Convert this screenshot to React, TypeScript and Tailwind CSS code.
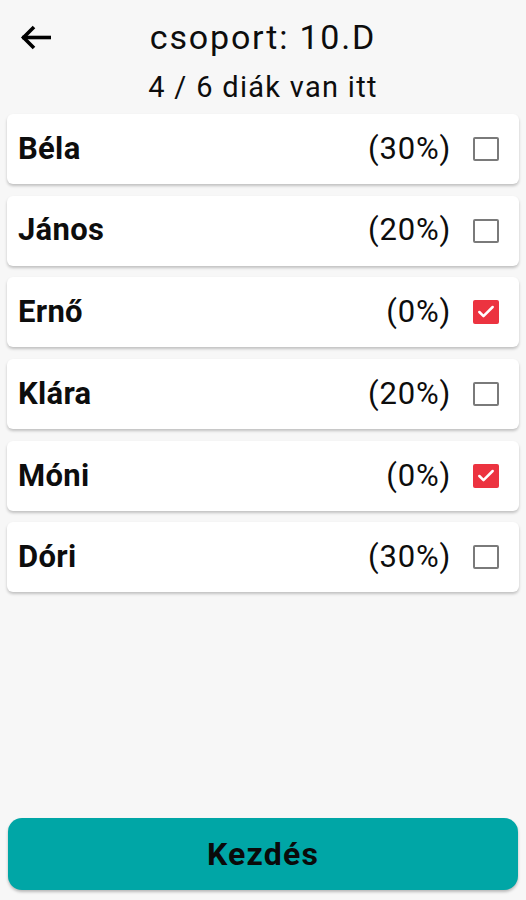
import { Check } from "lucide-react";

type Student = {
  name: string;
  percent: number;
  checked: boolean;
};

const students: Student[] = [
  { name: "Béla", percent: 30, checked: false },
  { name: "János", percent: 20, checked: false },
  { name: "Ernő", percent: 0, checked: true },
  { name: "Klára", percent: 20, checked: false },
  { name: "Móni", percent: 0, checked: true },
  { name: "Dóri", percent: 30, checked: false },
];

function BackArrow() {
  return (
    <svg
      width="31"
      height="25"
      viewBox="0 0 31 25"
      fill="none"
      stroke="#000"
      strokeWidth="3.6"
      strokeLinecap="square"
    >
      <path d="M30 12.5H4" />
      <path d="M14 2 3.5 12.5 14 23" strokeLinecap="butt" />
    </svg>
  );
}

function CheckBox({ checked }: { checked: boolean }) {
  if (checked) {
    return (
      <div className="w-[26px] h-[24px] bg-[#ec3340] rounded-[2px] flex items-center justify-center">
        <Check className="w-[20px] h-[20px] text-white" strokeWidth={3} />
      </div>
    );
  }
  return (
    <div className="w-[26px] h-[24px] border-[2px] border-[#7a7a7a] rounded-[2px] bg-white" />
  );
}

function StudentRow({ student }: { student: Student }) {
  return (
    <div className="h-[70px] bg-white rounded-[6px] shadow-[0_2px_3px_rgba(0,0,0,0.22)] flex items-center pl-[11px] pr-[20px]">
      <span className="flex-1 text-[31px] font-bold text-[#0d0d0d] tracking-[0.3px]">
        {student.name}
      </span>
      <span className="text-[31px] text-[#0d0d0d] tracking-[0.8px]">
        ({student.percent}%)
      </span>
      <div className="ml-[22px]">
        <CheckBox checked={student.checked} />
      </div>
    </div>
  );
}

export default function App() {
  const present = students.filter((s) => !s.checked).length;

  return (
    <div
      className="w-[526px] h-[900px] bg-[#f7f7f7] flex flex-col"
      style={{ fontFamily: "Roboto, 'Noto Sans', sans-serif" }}
    >
      <div className="grid grid-cols-[1fr_auto_1fr] items-center pt-[20px] px-[20px]">
        <BackArrow />
        <h1 className="text-[34px] leading-[34px] text-[#0d0d0d] tracking-[1.8px]">
          csoport: 10.D
        </h1>
        <div />
      </div>
      <p className="mt-[19px] text-center text-[29px] leading-[29px] text-[#0d0d0d] tracking-[1.3px]">
        {present} / {students.length} diák van itt
      </p>

      <div className="mt-[12px] px-[7px] flex flex-col gap-[11.7px]">
        {students.map((s) => (
          <StudentRow key={s.name} student={s} />
        ))}
      </div>

      <div className="mt-auto px-[8px] pb-[10px]">
        <button className="w-full h-[72px] rounded-[14px] bg-[#00a6a6] shadow-[0_2px_3px_rgba(0,0,0,0.25)] text-[32px] font-bold text-[#0a0a0a] tracking-[1.2px]">
          Kezdés
        </button>
      </div>
    </div>
  );
}
